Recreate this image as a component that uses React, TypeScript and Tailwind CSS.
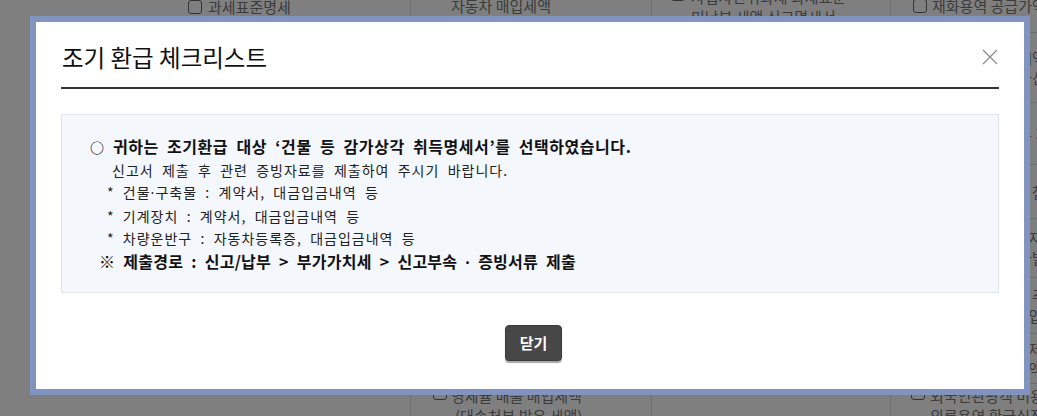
import React from "react";

function Box() {
  return <span className="inline-block w-[14px] h-[14px] rounded-[3px] border border-[#666] bg-white shrink-0" />;
}

const Dot = () => <span className="font-['Noto_Sans',sans-serif]">·</span>;

function Bg() {
  return (
    <div className="flex flex-col -mt-[20px] text-[#777] text-[15px] leading-[20px]">
      {/* top row */}
      <div className="grid grid-cols-[410px_241px_239px_260px] h-[53px]">
        <div className="flex items-center gap-[6px] pl-[188px]">
          <Box />
          <span>과세표준명세</span>
        </div>
        <div className="flex items-center pl-[40px] border-l border-b border-[#ddd]">자동차 매입세액</div>
        <div className="flex items-start gap-[6px] pl-[19px] pt-[7px] border-l border-b border-[#ddd]">
          <Box />
          <div className="flex flex-col">
            <span>사업자단위과세 과세표준</span>
            <span>미납부 세액 신고명세서</span>
          </div>
        </div>
        <div className="flex items-center gap-[5px] pl-[22px] border-l border-b border-[#ddd]">
          <Box />
          <span className="whitespace-nowrap">재화용역 공급가액 명세서</span>
        </div>
      </div>
      {[
        { h: "h-[70px]", a: "사업장별 매입세액가", b: "공통매입세액 가산" },
        { h: "h-[62px]", a: "영세율 첨부서류 제출", b: "" },
        { h: "h-[54px]", a: "수출실적명세서 첨부 ㄱ", b: "" },
        { h: "h-[59px]", a: "건물등감가상각자 견", b: "내국신용장 전자발급 ㅈ" },
        { h: "h-[56px]", a: "사업자단위과세 주 적", b: "공제받지못할매입 명" },
        { h: "h-[50px]", a: "의제매입세액공제 차", b: "재활용폐자원세액 금" },
      ].map((r, i) => (
        <div key={i} className={`grid grid-cols-[410px_241px_239px_260px] ${r.h}`}>
          <div />
          <div className="border-l border-b border-[#ddd]" />
          <div className="border-l border-b border-[#ddd]" />
          <div className="flex items-center gap-[5px] pl-[22px] border-l border-b border-[#ddd]">
            <Box />
            <div className="flex flex-col whitespace-nowrap">
              <span>{r.a}</span>
              {r.b && <span>{r.b}</span>}
            </div>
          </div>
        </div>
      ))}
      {/* bottom row */}
      <div className="grid grid-cols-[410px_241px_239px_260px] h-[60px]">
        <div />
        <div className="flex items-start gap-[4px] pl-[22px] pt-[2px] border-l border-[#ddd]">
          <Box />
          <div className="flex flex-col">
            <span>영세율 매출 매입세액</span>
            <span className="pl-[4px]">(대손처분 받은 세액)</span>
          </div>
        </div>
        <div className="border-l border-[#ddd]" />
        <div className="flex items-start gap-[5px] pl-[20px] pt-[2px] border-l border-[#ddd]">
          <Box />
          <div className="flex flex-col whitespace-nowrap">
            <span>외국인관광객 미용성형</span>
            <span>의류용역 환급실적명세서</span>
          </div>
        </div>
      </div>
    </div>
  );
}

export default function App() {
  return (
    <div className="relative w-[1037px] h-[416px] overflow-hidden bg-white font-['Noto_Sans_CJK_KR','Noto_Sans',sans-serif]">
      <Bg />
      <div className="absolute inset-0 bg-black/50" />
      <div className="absolute left-[30px] top-[16px] w-[1000px] h-[379px] border-[6px] border-[#8194bf] bg-white flex flex-col px-[25px]">
        <div className="flex items-center justify-between pt-[23px]">
          <h1 className="text-[23.5px] leading-[24px] text-[#111] pl-[1px]">조기 환급 체크리스트</h1>
          <svg width="16" height="16" viewBox="0 0 16 16" className="mr-[1px]">
            <path d="M1 1 L15 15 M15 1 L1 15" stroke="#8a8a8a" strokeWidth="1.2" fill="none" />
          </svg>
        </div>
        <div className="mt-[18px] h-[2px] bg-[#333]" />
        <div className="mt-[25px] h-[179px] border border-[#e0e4ee] bg-[#f4f7fc] pt-[20px] text-[#222] leading-[22.6px] [word-spacing:0.26em]">
          <p className="pl-[28px] text-[16px] font-bold text-[#111] tracking-[0.55px]">
            <span className="text-[14px]">○</span> 귀하는 조기환급 대상 ‘건물 등 감가상각 취득명세서’를 선택하였습니다.
          </p>
          <p className="pl-[50px] text-[14px] tracking-[1px]">신고서 제출 후 관련 증빙자료를 제출하여 주시기 바랍니다.</p>
          <p className="pl-[45px] text-[14px] tracking-[1px]">* 건물<Dot />구축물 : 계약서, 대금입금내역 등</p>
          <p className="pl-[45px] text-[14px] tracking-[1px]">* 기계장치 : 계약서, 대금입금내역 등</p>
          <p className="pl-[45px] text-[14px] tracking-[1px]">* 차량운반구 : 자동차등록증, 대금입금내역 등</p>
          <p className="pl-[37px] text-[16px] font-bold text-[#111] tracking-[0.25px]">
            ※ 제출경로 : 신고/납부 &gt; 부가가치세 &gt; 신고부속 <Dot /> 증빙서류 제출
          </p>
        </div>
        <div className="flex justify-center pl-[7px] mt-[32px]">
          <button className="w-[57px] h-[36px] rounded-[4px] bg-[#474747] border border-[#3c3c3c] shadow-[0_2px_1px_rgba(0,0,0,0.35)] text-white text-[15px] font-bold">
            닫기
          </button>
        </div>
      </div>
    </div>
  );
}
